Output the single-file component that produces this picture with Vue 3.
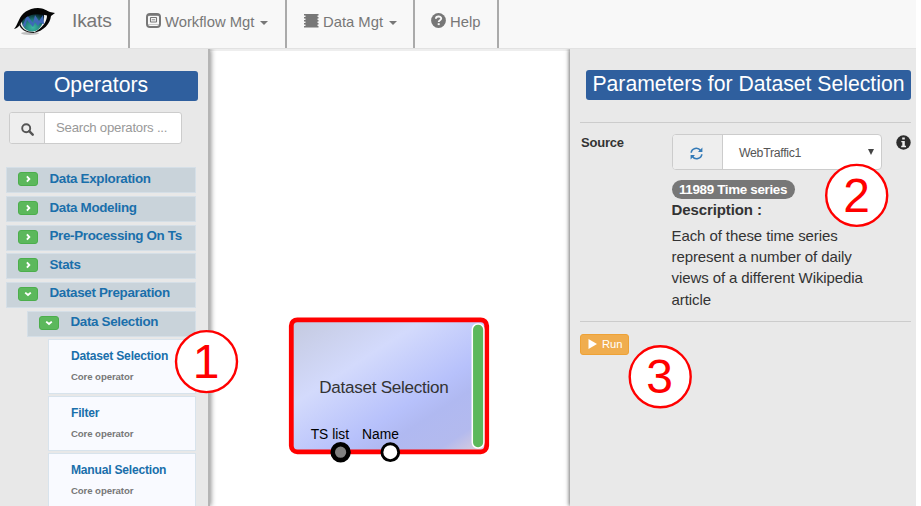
<script setup>
const families = [
  { name: 'Data Exploration', open: false },
  { name: 'Data Modeling', open: false },
  { name: 'Pre-Processing On Ts', open: false },
  { name: 'Stats', open: false },
  { name: 'Dataset Preparation', open: true },
  { name: 'Data Selection', open: true, nested: true },
]
const operators = ['Dataset Selection', 'Filter', 'Manual Selection']
</script>

<template>
  <div class="app">
    <nav class="navbar">
      <div class="brand">
        <svg class="logo" width="44" height="29" viewBox="0 0 44 29">
          <defs>
            <radialGradient id="iris" cx="50%" cy="80%" r="75%">
              <stop offset="0" stop-color="#3fb8a4" />
              <stop offset=".5" stop-color="#1f7c78" />
              <stop offset="1" stop-color="#04141c" />
            </radialGradient>
          </defs>
          <ellipse cx="17" cy="26.300" rx="9" ry="1.600" fill="#999" opacity=".6" />
          <path d="M6 19C10 8 18 5 34 8C33 16 28 23 18 25C12 25 8 22 6 19Z" fill="#f0f1f2" />
          <path d="M9 9C14 4 26 3 31 7C32 15 27 24 20 24.500C12 25 7 18 9 9Z" fill="url(#iris)" />
          <path d="M10 18L14 8L20 16L22 8L26 14L30 8L31 17L27 16L25 19L22 15L20 20L14 13L12 20Z" fill="#3f68b8" />
          <path d="M1 22C3 20 4 17 6 13C9 6 15 1.500 25 1C31 1 34 4 37 5L42 6L38 9C37 17 31 24 20 26C30 21 34 14 34 8.500C25 6 15 7 10 13C7 17 6 21 1 22Z" fill="#050505" />
          <path d="M7 15C8 22 14 25 21 25L21 26C13 26 7 22 6 17Z" fill="#111" />
        </svg>
        <span class="brand-name">Ikats</span>
      </div>
      <div class="nav-item workflow">
        <svg width="15" height="15" viewBox="0 0 15 15">
          <rect x="1" y="1" width="13" height="13" rx="3" fill="#f8f8f8" stroke="#777" stroke-width="2" />
          <path d="M2 2.300H13" stroke="#777" stroke-width="1" />
          <rect x="4.500" y="4.500" width="6" height="4.500" rx=".5" fill="none" stroke="#777" stroke-width="1.100" />
          <path d="M5.800 6.800H9.200" stroke="#777" stroke-width=".9" />
          <path d="M2 11.500H13" stroke="#aaa" stroke-width=".6" />
        </svg>
        <span class="nav-label">Workflow Mgt</span><i class="caret"></i>
      </div>
      <div class="nav-item data">
        <svg width="15" height="14" viewBox="0 0 15 14">
          <path d="M0 0H14.500V1.500H13.500V3H14.500V4.500H13.500V6H14.500V7.500H13.500V9H14.500V10.500H13.500V12H14.500V13.500H0V12H1.500V10.500H0V9H1.500V7.500H0V6H1.500V4.500H0V3H1.500V1.500H0Z" fill="#777" />
        </svg>
        <span class="nav-label">Data Mgt</span><i class="caret"></i>
      </div>
      <div class="nav-item help">
        <svg width="15" height="15" viewBox="0 0 15 15">
          <circle cx="7.500" cy="7.500" r="7.400" fill="#777" />
          <path d="M4.900 5.700C5 2.800 10.200 2.700 10.200 5.500C10.200 7.300 7.700 7.200 7.700 9" fill="none" stroke="#f8f8f8" stroke-width="1.900" />
          <rect x="6.700" y="10.200" width="2" height="1.900" fill="#f8f8f8" />
        </svg>
        <span class="nav-label">Help</span>
      </div>
    </nav>

    <main class="body">
      <aside class="sidebar">
        <h2 class="title">Operators</h2>
        <div class="search">
          <span class="search-icon">
            <svg width="13" height="13" viewBox="0 0 13 13" fill="none" stroke="#555">
              <circle cx="5.200" cy="5.200" r="4" stroke-width="1.900" />
              <path d="M8.200 8.200L11.700 11.700" stroke-width="2.400" stroke-linecap="round" />
            </svg>
          </span>
          <span class="search-field">Search operators ...</span>
        </div>
        <div class="tree">
          <div v-for="f in families" :key="f.name" class="family" :class="{ nested: f.nested }">
            <span class="toggle">
              <svg width="8" height="8" viewBox="0 0 8 8" fill="none" stroke="#fff" stroke-width="1.900">
                <path v-if="f.open" d="M1.200 2.600L4 5L6.800 2.600" />
                <path v-else d="M2.900 1.400L5.300 4L2.900 6.600" />
              </svg>
            </span>
            <span class="family-name">{{ f.name }}</span>
          </div>
          <div v-for="o in operators" :key="o" class="operator">
            <div class="operator-name">{{ o }}</div>
            <div class="operator-kind">Core operator</div>
          </div>
        </div>
      </aside>

      <section class="canvas">
        <svg width="355" height="458" viewBox="215 48 355 458">
          <defs>
            <linearGradient id="node" gradientUnits="userSpaceOnUse" x1="310" y1="298" x2="434" y2="490">
              <stop offset="0" stop-color="#c2c7db" />
              <stop offset=".35" stop-color="#d3dafc" />
              <stop offset=".62" stop-color="#b7c1fb" />
              <stop offset=".72" stop-color="#b0b9f1" />
              <stop offset=".86" stop-color="#b3baee" />
              <stop offset=".97" stop-color="#dccfdc" />
            </linearGradient>
          </defs>
          <rect x="291.300" y="319.800" width="195.400" height="132" rx="6" fill="url(#node)" stroke="#f00" stroke-width="4.800" />
          <rect x="472.300" y="324" width="11.600" height="124" rx="5.500" fill="#5cb85c" stroke="#fff" stroke-width="1.500" />
          <text class="node-name" x="319.300" y="393">Dataset Selection</text>
          <text x="310.700" y="438.500" font-size="13.800" fill="#000">TS list</text>
          <text x="362" y="438.500" font-size="13.800" fill="#000">Name</text>
          <circle cx="340.600" cy="452.200" r="7.900" fill="#808080" stroke="#000" stroke-width="4.600" />
          <circle cx="390.300" cy="452.200" r="8.400" fill="#fff" stroke="#000" stroke-width="2.900" />
        </svg>
      </section>

      <aside class="params">
        <h2 class="title params-title">Parameters for Dataset Selection</h2>
        <div class="param">
          <div class="param-label">Source</div>
          <div class="param-value">
            <div class="picker">
              <span class="refresh">
                <svg width="13" height="13" viewBox="0 0 13 13" fill="none" stroke="#337ab7" stroke-width="1.600">
                  <path d="M1.200 5.700C1.600 1 8 -.2 10.500 3.500M11.800 7.300C11.400 12 5 13.200 2.500 9.500" />
                  <path d="M12.400 .6V5H8ZM.6 12.400V8H5Z" fill="#337ab7" stroke="none" />
                </svg>
              </span>
              <span class="select">WebTraffic1<i class="arrow"></i></span>
            </div>
            <span class="badge">11989 Time series</span>
            <div class="desc-title">Description :</div>
            <p class="desc">Each of these time series represent a number of daily views of a different Wikipedia article</p>
          </div>
          <svg class="info" width="15" height="15" viewBox="0 0 15 15">
            <circle cx="7.500" cy="7.500" r="7.200" fill="#2d2d2d" />
            <path d="M6.200 2.500H8.800V4.600H6.200ZM5.300 5.900H8.800V10.700H10V12.200H5.200V10.700H6.300V7.300H5.300Z" fill="#eee" />
          </svg>
        </div>
        <div class="actions">
          <span class="run">
            <svg width="9" height="10" viewBox="0 0 9 10"><path d="M.5 0L9 5L.5 10Z" fill="#fff" /></svg>
            Run
          </span>
        </div>
      </aside>
    </main>

    <svg class="marks" width="921" height="506" viewBox="0 0 921 506">
      <g fill="#fff" stroke="#f00" stroke-width="2.400">
        <circle cx="206.500" cy="361.600" r="30.500" />
        <circle cx="856.700" cy="195.400" r="30.500" />
        <circle cx="660.200" cy="376.800" r="30.500" />
      </g>
      <g fill="#f00" font-size="48" text-anchor="middle">
        <text x="206" y="378">1</text>
        <text x="856.500" y="212">2</text>
        <text x="659.500" y="393">3</text>
      </g>
    </svg>
  </div>
</template>

<style>
body { background: #fff; overflow: hidden; }
</style>

<style scoped>
* { box-sizing: border-box; }
.app {
  position: relative;
  width: 921px;
  height: 506px;
  padding-right: 5px;
  overflow: hidden;
  display: flex;
  flex-direction: column;
  font-family: "Liberation Sans", Arial, sans-serif;
  color: #333;
}
.navbar {
  display: flex;
  flex: 0 0 49px;
  background: #f8f8f8;
  border-bottom: 1px solid #e2e2e2;
  color: #777;
}
.brand {
  display: flex;
  align-items: flex-start;
  width: 130px;
  padding: 7px 0 0 13px;
  border-right: 2px solid #aaa;
}
.brand-name { margin: 3px 0 0 15px; font-size: 19.200px; letter-spacing: -.2px; line-height: 22px; }
.nav-item {
  display: flex;
  align-items: flex-start;
  padding-top: 13px;
  border-right: 2px solid #aaa;
  font-size: 14.800px;
  line-height: 18px;
  white-space: nowrap;
}
.nav-label { margin-left: 4px; }
.workflow { width: 157px; padding-left: 16px; }
.data { width: 128px; padding-left: 17px; }
.data svg { margin-top: 1px; }
.help { width: 84px; padding-left: 16px; }
.caret {
  margin: 8px 0 0 6px;
  border-top: 4px solid #777;
  border-left: 4px solid transparent;
  border-right: 4px solid transparent;
}
.body { flex: 1; display: flex; min-height: 0; overflow: hidden; }
.sidebar {
  width: 210px;
  padding: 22px 0 0 4px;
  background: #e8e8e8;
  border-right: 2px solid #b4b4b4;
  box-shadow: 1px 0 5px rgba(0, 0, 0, .45);
  z-index: 1;
}
.title {
  width: 194px;
  height: 30px;
  margin: 0;
  border-radius: 3px;
  background: #2f5f9e;
  color: #fff;
  font-size: 21.200px;
  font-weight: 400;
  line-height: 27px;
  text-align: center;
  white-space: nowrap;
}
.search {
  display: flex;
  width: 173px;
  height: 32px;
  margin: 11px 0 0 5px;
  border: 1px solid #ccc;
  border-radius: 3px;
  background: #fff;
  overflow: hidden;
}
.search-icon {
  display: flex;
  align-items: center;
  width: 35px;
  padding: 2px 0 0 11px;
  background: #eee;
  border-right: 1px solid #ccc;
}
.search-field { padding-left: 11px; color: #999; font-size: 13.200px; letter-spacing: -.23px; line-height: 30px; }
.tree { display: flex; flex-direction: column; gap: 2.500px; margin: 23.300px 0 0 2.200px; width: 189.500px; }
.family {
  display: flex;
  flex: none;
  height: 26.150px;
  padding: 4px 0 0 10.800px;
  background: #c9d3da;
  border: 1px solid #d5dfe7;
}
.nested { margin-left: 21px; }
.toggle {
  display: flex;
  align-items: center;
  justify-content: center;
  width: 20px;
  height: 14px;
  background: #5cb85c;
  border: 1px solid #4cae4c;
  border-radius: 3px;
}
.family-name { margin: -1.400px 0 0 11.500px; color: #1a6fab; font-size: 13.400px; letter-spacing: -.33px; font-weight: 700; line-height: 16px; white-space: nowrap; }
.operator {
  flex: none;
  height: 54.600px;
  margin-left: 41.800px;
  padding: 9px 0 0 22px;
  background: #f9faff;
  border: 1px solid #d8e3ec;
}
.operator-name { color: #1a6fab; font-size: 12.100px; letter-spacing: -.22px; font-weight: 700; line-height: 14px; }
.operator-kind { margin-top: 7px; color: #777; font-size: 9.600px; letter-spacing: -.08px; font-weight: 700; line-height: 14px; }
.canvas {
  flex: 1;
  display: flex;
  justify-content: flex-end;
  align-items: flex-end;
  border-top: 2px solid #eee;
  min-width: 0;
}
.canvas svg { flex: none; }
.node-name { font-size: 17.100px; letter-spacing: -.28px; fill: #333; }
.params {
  width: 346px;
  padding: 21px 5px 0 10px;
  background: #e9e9e9;
  box-shadow: -1px 0 4px rgba(0, 0, 0, .55);
  clip-path: inset(0 0 0 -10px);
}
.params-title { width: 325px; margin-left: 6px; }
.param {
  display: flex;
  height: 200px;
  margin-top: 22px;
  padding-top: 11px;
  border-top: 1px solid #ccc;
  border-bottom: 1px solid #ccc;
}
.param-label { width: 92px; padding: 1px 0 0 1px; font-size: 13px; letter-spacing: -.2px; font-weight: 700; line-height: 16px; }
.param-value { width: 210px; }
.picker {
  display: flex;
  height: 36px;
  border: 1px solid #ccc;
  border-radius: 4px;
  background: #fff;
  overflow: hidden;
}
.refresh {
  display: flex;
  align-items: center;
  justify-content: center;
  width: 50px;
  padding: 3px 2px 0 0;
  background: #eee;
  border-right: 1px solid #ccc;
}
.select { display: flex; flex: 1; padding-left: 16px; color: #555; font-size: 12.300px; letter-spacing: -.3px; line-height: 36px; }
.arrow {
  margin: 14px 7px 0 auto;
  height: 0;
  border-top: 6px solid #444;
  border-left: 3px solid transparent;
  border-right: 3px solid transparent;
}
.badge {
  display: block;
  width: 123px;
  height: 19px;
  margin-top: 10px;
  padding-right: 1px;
  border-radius: 10px;
  background: #777;
  color: #fff;
  font-size: 13.400px;
  letter-spacing: -.33px;
  font-weight: 700;
  line-height: 19px;
  text-align: center;
  white-space: nowrap;
}
.desc-title { margin-left: -.5px; font-size: 15px; letter-spacing: -.1px; font-weight: 700; line-height: 22px; }
.desc { width: 200px; margin: 4px 0 0 -.5px; font-size: 15px; letter-spacing: -.09px; line-height: 21.200px; }
.info { margin: 1px 0 0 14px; flex: none; }
.actions { padding-top: 12px; }
.run {
  display: flex;
  align-items: center;
  gap: 5px;
  width: 49px;
  height: 21px;
  padding: 0 0 1px 7px;
  border: 1px solid #eea236;
  border-radius: 3px;
  background: #f0ad4e;
  color: #fff;
  font-size: 11.200px;
}
.marks { position: absolute; top: 0; left: 0; z-index: 5; }
</style>
